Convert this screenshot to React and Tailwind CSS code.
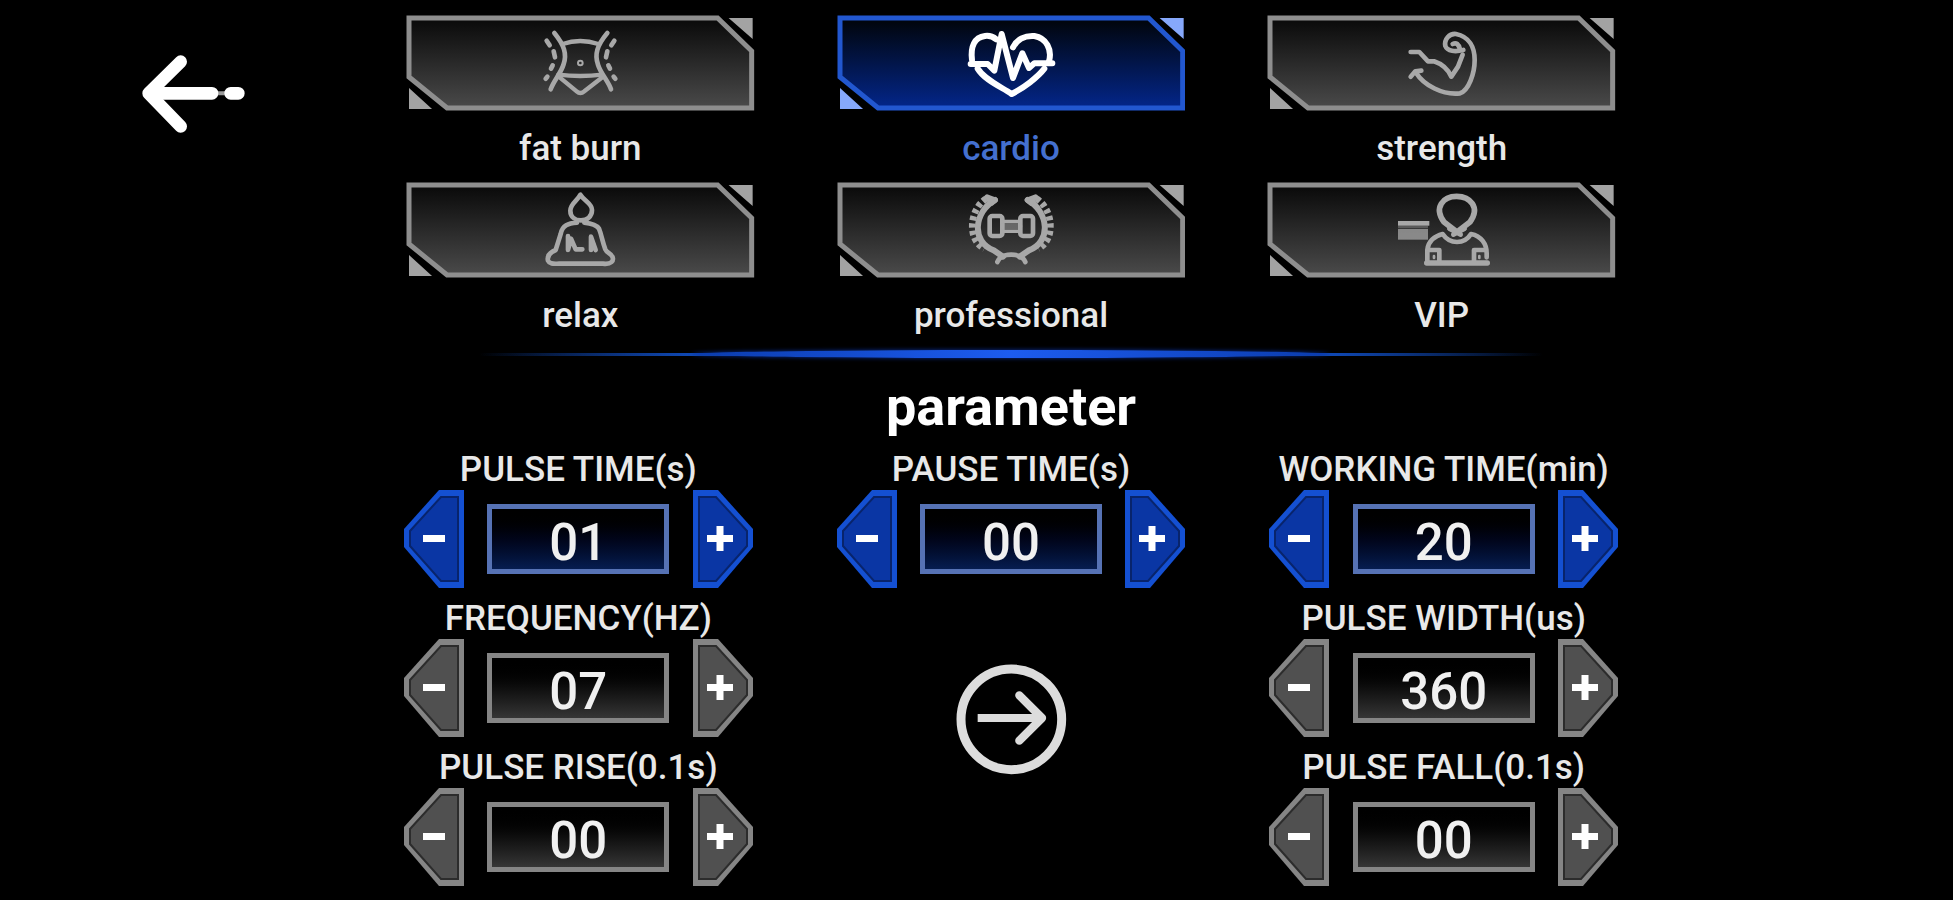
import React, { useState } from 'react';

const FatBurnIcon = () => (
  <>
    <path d="M478 99 C508 136 516 162 506 192 C498 220 476 242 467 268" />
    <path d="M637 99 C606 136 598 164 609 194 C618 222 640 244 648 268" />
    <path d="M503 132 Q555 114 610 132 M490 224 Q555 232 622 224" strokeWidth="13" />
    <path d="M494 232 L545 274 Q556 284 568 274 L622 232" strokeWidth="13" />
    <path d="M455 122 L464 136 M476 154 L480 172 M473 196 L468 206 M452 236 L457 230" />
    <path d="M658 122 L649 136 M637 154 L633 172 M640 196 L645 206 M661 236 L656 230" />
    <circle cx="556" cy="189" r="3" />
  </>
);

const CardioIcon = () => (
  <g strokeWidth="18">
    <path d="M441 180 C436 140 448 112 480 108 C494 106 504 110 514 118" />
    <path d="M437 192 H488 L508 212 L530 102 L564 234 L592 160 L612 204 L628 190 H682" />
    <path d="M564 142 C576 118 600 106 628 108 C664 114 682 148 672 184" />
    <path d="M458 206 C480 242 532 262 560 282 C596 264 638 232 658 206" />
  </g>
);

const StrengthIcon = () => (
  <>
    <path d="M464 156 H490 L516 184 H534 C558 192 576 208 586 230 L606 200 L620 164" />
    <path d="M622 150 C598 156 574 154 568 138 C564 118 580 100 600 102 C640 110 656 142 656 180 C656 220 638 272 612 280 C560 286 504 256 480 218" />
    <path d="M590 132 Q606 124 612 148 M464 230 L478 214 L496 212" />
  </>
);

const RelaxIcon = () => (
  <>
    <path d="M556 74 C548 92 526 100 526 122 C526 142 542 151 558 151 C576 151 591 140 591 120 C591 100 566 92 556 74 Z" />
    <path d="M546 158 C520 160 502 166 497 192 L482 240 C464 248 456 260 459 272 C464 284 480 281 492 281 H624 C650 284 656 272 653 262 C648 248 636 250 631 238 C622 214 620 196 612 176 C604 164 586 160 568 158" />
    <path d="M519 198 V240 L528 206 L542 238 H562 M588 240 V200 L602 240" />
  </>
);

const ProfessionalIcon = () => (
  <>
    <path d="M510 90 C448 124 436 216 508 242 L534 260" strokeWidth="18" />
    <path d="M608 90 C670 124 682 216 610 242 L584 260" strokeWidth="18" />
    <path d="M484 86 C434 116 424 208 478 236" strokeWidth="20" strokeLinecap="butt" strokeDasharray="13 9" />
    <path d="M634 86 C684 116 694 208 640 236" strokeWidth="20" strokeLinecap="butt" strokeDasharray="13 9" />
    <path d="M486 80 L512 90 L500 100 Z M632 80 L606 90 L618 100 Z" />
    <path d="M517 276 Q526 254 559 254 Q592 254 601 276" />
    <rect x="494" y="138" width="38" height="60" rx="8" />
    <rect x="586" y="138" width="38" height="60" rx="8" />
    <path d="M536 154 H582 M536 184 H582" strokeWidth="10" />
    <path d="M536 169 H582" strokeWidth="20" opacity="0.5" />
  </>
);

const VipIcon = () => (
  <>
    <path d="M426 160 H520" strokeLinecap="butt" />
    <path d="M426 193 H516" strokeLinecap="butt" strokeWidth="32" opacity="0.75" />
    <path d="M426 171 H516" strokeLinecap="butt" strokeWidth="8" opacity="0.4" />
    <path d="M603 186 L564 156 C532 112 562 79 602 79 C642 79 674 112 642 156 Z" strokeWidth="17" />
    <path d="M580 176 L614 194 M626 176 L592 194" />
    <path d="M514 278 V240 C516 214 536 198 560 192 Q576 216 603 216 Q630 216 645 192 C676 198 692 222 692 250 V262" />
    <path d="M512 279 H694" strokeWidth="16" />
    <path d="M518 240 H550 V278 M654 278 V240 H690" />
    <path d="M534 258 V264 M670 258 V264" strokeWidth="8" />
  </>
);

const modes = [
  { name: 'fat burn', Icon: FatBurnIcon, box: '405 45 300 288' },
  { name: 'cardio', Icon: CardioIcon, box: '408 45 300 288' },
  { name: 'strength', Icon: StrengthIcon, box: '408 45 300 288' },
  { name: 'relax', Icon: RelaxIcon, box: '405 36 300 288' },
  { name: 'professional', Icon: ProfessionalIcon, box: '408 36 300 288' },
  { name: 'VIP', Icon: VipIcon, box: '408 36 300 288' },
];

function ModeButton({ mode, active, onSelect }) {
  const { name, Icon, box } = mode;
  return (
    <button type="button" aria-pressed={active} onClick={onSelect} className="flex flex-col gap-[18px]">
      <span className="grid w-full place-items-center">
        <svg viewBox="0 0 348 96" preserveAspectRatio="none" className="col-start-1 row-start-1 h-24 w-full">
          <defs>
            <linearGradient id="panel-gray" x1="0" y1="0" x2="0" y2="1">
              <stop offset="0.05" stopColor="#0c0c0c" />
              <stop offset="1" stopColor="#4a4a4a" />
            </linearGradient>
            <linearGradient id="panel-blue" x1="0" y1="0" x2="0" y2="1">
              <stop offset="0.05" stopColor="#01060f" />
              <stop offset="1" stopColor="#03268a" />
            </linearGradient>
          </defs>
          <path
            d="M3 3 H311 L345 36 V93 H41 L3 62 Z"
            fill={active ? 'url(#panel-blue)' : 'url(#panel-gray)'}
            stroke={active ? '#2257cf' : '#8e8e8e'}
            strokeWidth="5"
          />
          <path d="M322 3 H346 V24 Z M3 73 L26 94 H3 Z" fill={active ? '#86a8fb' : '#a3a3a3'} />
        </svg>
        <svg
          viewBox={box}
          fill="none"
          stroke={active ? '#ffffff' : '#a8a8a8'}
          strokeWidth="14"
          strokeLinecap="round"
          strokeLinejoin="round"
          className="col-start-1 row-start-1 h-24 w-[100px]"
        >
          <Icon />
        </svg>
      </span>
      <span
        className={`w-full text-center text-[35px] leading-10 font-medium ${active ? 'text-[#4470cf]' : 'text-[#e8e8e8]'}`}
      >
        {name}
      </span>
    </button>
  );
}

function StepButton({ label, plus, blue, onClick }) {
  return (
    <button type="button" aria-label={label} onClick={onClick}>
      <svg viewBox="0 0 60 98" className="h-[98px] w-[60px]">
        <g transform={plus ? undefined : 'matrix(-1 0 0 1 60 0)'}>
          <path d="M0 0 H25 L60 39 V57 L25 98 H0 Z" fill={blue ? '#1450d2' : '#858585'} />
          <path
            d="M6 7 H23 L54 41 V56 L23 91 H6 Z"
            fill={blue ? '#0a36a4' : '#505050'}
            stroke={blue ? '#08246c' : '#2c2c2c'}
            strokeWidth="2"
          />
          <path d={plus ? 'M14 48.5 H40 M27 36 V61' : 'M19 48.5 H41'} stroke="#ffffff" strokeWidth="7" />
        </g>
      </svg>
    </button>
  );
}

function Stepper({ id, label, digits = 2, initial, blue }) {
  const [value, setValue] = useState(initial);
  const step = (by) => setValue(String(Math.max(0, Number(value) + by)).padStart(digits, '0'));

  return (
    <div>
      <label
        htmlFor={id}
        className="block pt-[11px] text-center text-[35px] leading-10 font-medium whitespace-nowrap text-[#e8e8e8]"
      >
        {label}
      </label>
      <div className="flex items-center justify-between">
        <StepButton label={`Decrease ${label}`} blue={blue} onClick={() => step(-1)} />
        <input
          id={id}
          type="text"
          inputMode="numeric"
          value={value}
          onChange={(e) => setValue(e.target.value)}
          className={`h-[70px] w-[182px] border-[5px] bg-linear-to-b from-black pt-1.5 text-center text-[51px] leading-none font-medium text-[#f0f0f0] outline-none ${
            blue ? 'border-[#5672b4] to-[#061d50]' : 'border-[#858585] to-[#363636]'
          }`}
        />
        <StepButton label={`Increase ${label}`} plus blue={blue} onClick={() => step(1)} />
      </div>
    </div>
  );
}

export default function App() {
  const [mode, setMode] = useState('cardio');

  return (
    <div className="grid min-h-screen grid-cols-[406fr_1210fr_337fr] bg-black font-['Roboto',sans-serif]">
      {/* Back */}
      <nav className="pt-[52px] pl-[140px]">
        <button type="button" aria-label="Back">
          <svg
            viewBox="60 66 318 252"
            fill="none"
            stroke="#ffffff"
            strokeWidth="38"
            strokeLinecap="round"
            strokeLinejoin="round"
            className="h-[84px] w-[106px]"
          >
            <path d="M182 95 L86 190 L182 289" />
            <path d="M90 190 H276 M332 190 H355" strokeWidth="38" />
            <path d="M290 190 H320" strokeWidth="12" opacity="0.6" />
          </svg>
        </button>
      </nav>

      <main className="pt-[15px]">
        {/* Training modes */}
        <section className="grid grid-cols-3 gap-x-[82px] gap-y-[13px]">
          {modes.map((m) => (
            <ModeButton key={m.name} mode={m} active={m.name === mode} onSelect={() => setMode(m.name)} />
          ))}
        </section>

        {/* Glowing divider */}
        <div className="mt-[14px] grid items-center px-[6%]">
          <div className="col-start-1 row-start-1 h-[3px] bg-linear-to-r from-transparent via-[#0f48b4] via-20% to-transparent" />
          <div className="col-start-1 row-start-1 h-[3px] bg-linear-to-l from-transparent via-[#0f48b4] via-20% to-transparent" />
          <div className="col-start-1 row-start-1 mx-[20%] h-2 rounded-[50%] bg-linear-to-r from-[#0b3cae] via-[#1d5cf0] to-[#0b3cae] shadow-[0_0_4px_#0a2f9a]" />
        </div>

        {/* Parameters */}
        <h1 className="mt-[21px] mb-1 text-center text-[54px] leading-[56px] font-bold text-white">parameter</h1>
        <section className="-mx-0.5 grid grid-cols-3 gap-x-[84px]">
          <Stepper id="pulse-time" label="PULSE TIME(s)" initial="01" blue />
          <Stepper id="pause-time" label="PAUSE TIME(s)" initial="00" blue />
          <Stepper id="working-time" label="WORKING TIME(min)" initial="20" blue />
          <Stepper id="frequency" label="FREQUENCY(HZ)" initial="07" />
          <div className="row-span-2 pt-[75px] text-center">
            <button type="button" aria-label="Start">
              <svg viewBox="42 38 336 336" fill="none" stroke="#dcdcdc" className="size-28">
                <circle cx="211" cy="207" r="151" strokeWidth="27" />
                <path d="M110 203 H300" strokeWidth="24" />
                <path d="M235 135 L303 203 L235 271" strokeWidth="25" strokeLinecap="round" strokeLinejoin="round" />
              </svg>
            </button>
          </div>
          <Stepper id="pulse-width" label="PULSE WIDTH(us)" digits={3} initial="360" />
          <Stepper id="pulse-rise" label="PULSE RISE(0.1s)" initial="00" />
          <Stepper id="pulse-fall" label="PULSE FALL(0.1s)" initial="00" />
        </section>
      </main>
    </div>
  );
}
